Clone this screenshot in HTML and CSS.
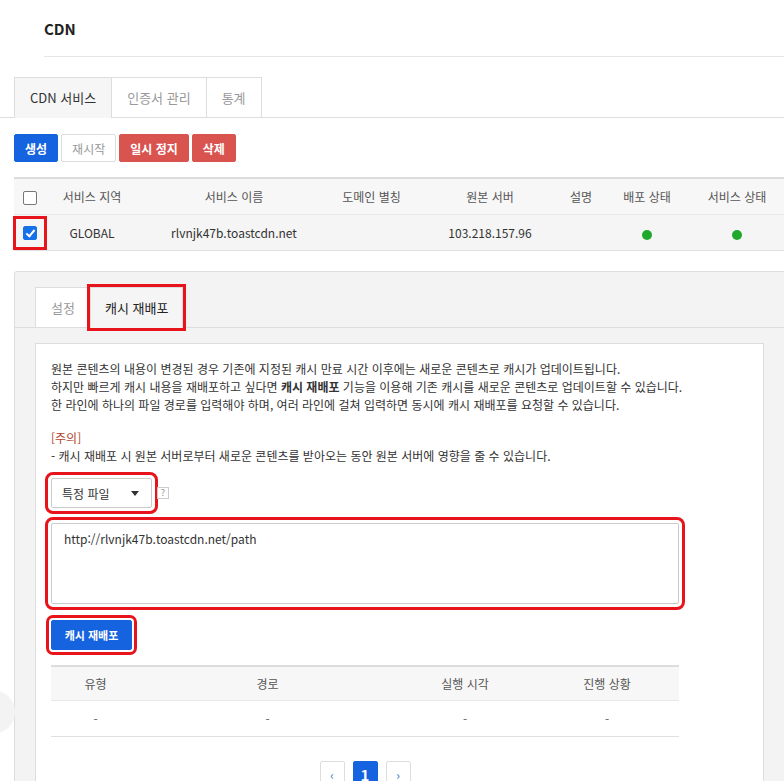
FILE: index.html
```html
<!DOCTYPE html>
<html lang="ko">
<head>
    <meta charset="UTF-8">
    <meta name="viewport" content="width=device-width, initial-scale=1.0">
    <title>CDN</title>
    <link rel="stylesheet" href="styles.css">
</head>
<body>
    <div class="title-bar">CDN</div>

    <div class="main-tabs">
        <div class="tab active">CDN 서비스</div>
        <div class="tab">인증서 관리</div>
        <div class="tab">통계</div>
    </div>

    <div class="main">
        <div class="toolbar">
            <button class="btn btn-blue">생성</button>
            <button class="btn btn-white">재시작</button>
            <button class="btn btn-red">일시 정지</button>
            <button class="btn btn-red">삭제</button>
        </div>

        <table class="grid service-grid">
            <colgroup>
                <col style="width: 31px">
                <col style="width: 94px">
                <col style="width: 190px">
                <col style="width: 85px">
                <col style="width: 152px">
                <col style="width: 30px">
                <col style="width: 102px">
                <col style="width: 86px">
            </colgroup>
            <thead>
                <tr>
                    <th><span class="check"></span></th>
                    <th>서비스 지역</th>
                    <th>서비스 이름</th>
                    <th>도메인 별칭</th>
                    <th>원본 서버</th>
                    <th>설명</th>
                    <th>배포 상태</th>
                    <th>서비스 상태</th>
                </tr>
            </thead>
            <tbody>
                <tr class="selected">
                    <td><div class="check-mark"><span class="check checked"></span></div></td>
                    <td>GLOBAL</td>
                    <td>rlvnjk47b.toastcdn.net</td>
                    <td></td>
                    <td>103.218.157.96</td>
                    <td></td>
                    <td><span class="dot"></span></td>
                    <td><span class="dot"></span></td>
                </tr>
            </tbody>
        </table>

        <div class="detail">
            <div class="sub-tabs">
                <div class="tab">설정</div>
                <div class="tab active mark">캐시 재배포</div>
            </div>

            <div class="content">
                <p class="desc">
                    원본 콘텐츠의 내용이 변경된 경우 기존에 지정된 캐시 만료 시간 이후에는 새로운 콘텐츠로 캐시가 업데이트됩니다.<br>
                    하지만 빠르게 캐시 내용을 재배포하고 싶다면 <b>캐시 재배포</b> 기능을 이용해 기존 캐시를 새로운 콘텐츠로 업데이트할 수 있습니다.<br>
                    한 라인에 하나의 파일 경로를 입력해야 하며, 여러 라인에 걸쳐 입력하면 동시에 캐시 재배포를 요청할 수 있습니다.
                </p>
                <p class="desc warn">
                    <span class="notice">[주의]</span><br>
                    - 캐시 재배포 시 원본 서버로부터 새로운 콘텐츠를 받아오는 동안 원본 서버에 영향을 줄 수 있습니다.
                </p>

                <div class="select-row">
                    <div class="select mark">
                        <span>특정 파일</span>
                        <span class="caret"></span>
                    </div>
                    <span class="help">?</span>
                </div>

                <div class="path-input mark">http://rlvnjk47b.toastcdn.net/path</div>

                <button class="btn btn-blue btn-purge mark">캐시 재배포</button>

                <div class="result">
                    <table class="grid">
                        <colgroup>
                            <col style="width: 89px">
                            <col style="width: 255px">
                            <col style="width: 140px">
                            <col style="width: 144px">
                        </colgroup>
                        <thead>
                            <tr>
                                <th>유형</th>
                                <th>경로</th>
                                <th>실행 시각</th>
                                <th>진행 상황</th>
                            </tr>
                        </thead>
                        <tbody>
                            <tr>
                                <td>-</td>
                                <td>-</td>
                                <td>-</td>
                                <td>-</td>
                            </tr>
                        </tbody>
                    </table>

                    <div class="pager">
                        <span class="page">&lsaquo;</span>
                        <span class="page current">1</span>
                        <span class="page">&rsaquo;</span>
                    </div>
                </div>
            </div>
        </div>
    </div>

    <div class="float-btn"></div>
</body>
</html>
```

FILE: styles.css
```css
html, body {
    margin: 0;
    padding: 0;
    overflow: hidden;
}
body {
    font-family: "Noto Sans CJK KR", "Noto Sans", sans-serif;
    font-size: 12px;
    color: #333;
    background: #fff;
    position: relative;
    min-height: 781px;
}
.title-bar {
    margin-left: 44px;
    height: 56px;
    line-height: 58px;
    border-bottom: 1px solid #e6e6e6;
    font-size: 15px;
    font-weight: 700;
    color: #222;
}
.main-tabs {
    display: flex;
    margin-top: 20px;
    padding-left: 14px;
    border-bottom: 1px solid #ddd;
}
.tab {
    height: 39px;
    line-height: 39px;
    padding: 0 15px;
    border: 1px solid #ddd;
    border-bottom: none;
    margin-right: -1px;
    background: #fff;
    color: #999;
    font-size: 13px;
    margin-bottom: -1px;
}
.tab.active {
    background: #f6f6f6;
    color: #333;
    height: 40px;
}
.main {
    padding-left: 14px;
}
.toolbar {
    display: flex;
    gap: 3px;
    margin-top: 16px;
}
.btn {
    font-family: inherit;
    height: 28px;
    padding: 0 10px;
    border: 1px solid transparent;
    border-radius: 2px;
    font-size: 12px;
    font-weight: 700;
    cursor: pointer;
}
.btn-blue {
    background: #1663e0;
    border-color: #1663e0;
    color: #fff;
}
.btn-white {
    background: #fff;
    border-color: #ddd;
    color: #999;
    font-weight: 400;
}
.btn-red {
    background: #d9534f;
    border-color: #d9534f;
    color: #fff;
}

.grid {
    border-collapse: collapse;
    table-layout: fixed;
}
.grid th {
    height: 35px;
    background: #f7f7f7;
    font-weight: 400;
    color: #555;
    text-align: center;
    border-top: 2px solid #ddd;
    border-bottom: 1px solid #e8e8e8;
    padding: 0;
}
.grid td {
    height: 35px;
    text-align: center;
    border-bottom: 1px solid #e0e0e0;
    padding: 0;
}
.service-grid {
    margin-top: 15px;
    width: 770px;
}
.service-grid th:last-child,
.service-grid td:last-child {
    padding-right: 8px;
}
.selected td {
    background: #f5f5f5;
}
.check {
    display: inline-block;
    width: 12px;
    height: 12px;
    border: 1px solid #777;
    border-radius: 2px;
    background: #fff;
    vertical-align: middle;
    position: relative;
}
.check.checked {
    background: #1671e8;
    border-color: #1671e8;
}
.check.checked::after {
    content: "";
    position: absolute;
    left: 4px;
    top: 1px;
    width: 3px;
    height: 7px;
    border: solid #fff;
    border-width: 0 2px 2px 0;
    transform: rotate(40deg);
}
.check-mark {
    width: 28px;
    height: 28px;
    margin: 0 auto;
    display: flex;
    align-items: center;
    justify-content: center;
    outline: 3px solid #e8141c;
}
.dot {
    display: inline-block;
    width: 10px;
    height: 10px;
    border-radius: 50%;
    background: #1fa82b;
    vertical-align: middle;
}

.detail {
    margin-top: 20px;
    width: 790px;
    background: #f3f3f3;
    border: 1px solid #ddd;
    border-radius: 3px 0 0 0;
    padding-top: 15px;
    min-height: 500px;
}
.sub-tabs {
    display: flex;
    padding-left: 20px;
    border-bottom: 1px solid #ddd;
}
.sub-tabs .tab.active {
    background: #f5f5f5;
    color: #222;
    padding: 0 14px;
}
.mark {
    outline: 3px solid #e8141c;
    outline-offset: 3px;
}
.sub-tabs .mark {
    outline-offset: 0;
}
.content {
    margin: 15px 0 0 20px;
    width: 697px;
    background: #fff;
    border: 1px solid #ddd;
    padding: 16px 15px 20px;
    min-height: 420px;
}
.desc {
    margin: 0 0 15px;
    line-height: 18px;
}
.desc.warn {
    margin-bottom: 13px;
}
.notice {
    color: #b0442a;
}
.select-row {
    display: flex;
    align-items: center;
    gap: 5px;
}
.select {
    box-sizing: border-box;
    width: 101px;
    height: 30px;
    border: 1px solid #ccc;
    border-radius: 2px;
    display: flex;
    align-items: center;
    justify-content: space-between;
    padding: 0 12px 0 10px;
    font-size: 12px;
}
.caret {
    width: 0;
    height: 0;
    border-left: 4px solid transparent;
    border-right: 4px solid transparent;
    border-top: 5px solid #333;
}
.help {
    box-sizing: border-box;
    width: 12px;
    height: 12px;
    border: 1px solid #ccc;
    font-size: 9px;
    line-height: 10px;
    text-align: center;
    color: #999;
}
.path-input {
    box-sizing: border-box;
    width: 628px;
    height: 81px;
    margin-top: 15px;
    border: 1px solid #ccc;
    border-radius: 2px;
    padding: 6px 12px;
    font-size: 12px;
    line-height: 18px;
}
.btn-purge {
    display: block;
    margin-top: 16px;
    height: 30px;
    width: 81px;
    padding: 0;
    font-size: 11px;
    outline-offset: 2px;
}
.result {
    width: 628px;
    margin-top: 15px;
}
.result .grid {
    width: 628px;
}
.result .grid th {
    height: 33px;
}
.result .grid td {
    color: #666;
}
.pager {
    display: flex;
    justify-content: center;
    gap: 8px;
    margin-top: 24px;
}
.page {
    box-sizing: border-box;
    width: 25px;
    height: 28px;
    line-height: 26px;
    text-align: center;
    border: 1px solid #ddd;
    border-radius: 2px;
    color: #3a6fc0;
    font-size: 12px;
}
.page.current {
    background: #1663e0;
    border-color: #1663e0;
    color: #fff;
    font-weight: 700;
    font-size: 15px;
}
.float-btn {
    position: absolute;
    left: -29px;
    top: 690px;
    width: 44px;
    height: 44px;
    border-radius: 50%;
    background: #f3f3f3;
}
```
